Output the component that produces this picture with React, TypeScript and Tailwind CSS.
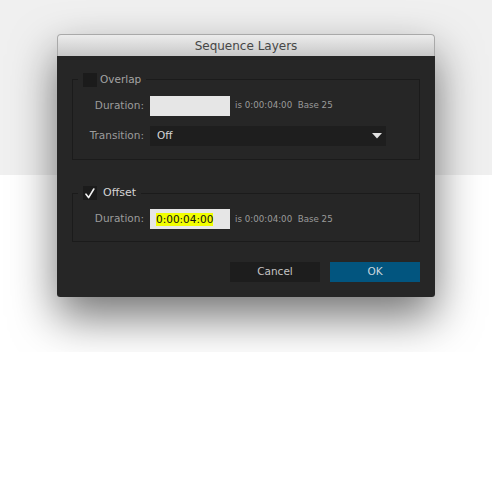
const font = "font-['DejaVu_Sans',sans-serif]";

function Checkbox({ checked }: { checked?: boolean }) {
  return (
    <span className="flex h-[14px] w-[14px] items-center justify-center bg-[#1b1b1b]">
      {checked && (
        <svg width="10" height="11" viewBox="0 0 10 11" fill="none">
          <path
            d="M1 6.2 L3.6 9.6 L8.8 1"
            stroke="#f2f2f2"
            strokeWidth="1.6"
            strokeLinecap="round"
            strokeLinejoin="round"
          />
        </svg>
      )}
    </span>
  );
}

function Row({ label, children }: { label: string; children: React.ReactNode }) {
  return (
    <div className="flex h-[20px] items-center">
      <span className="w-[71px] text-right text-[10.5px] text-[#9c9c9c]">{label}</span>
      <div className="ml-[6px] flex h-full items-center">{children}</div>
    </div>
  );
}

function Hint() {
  return (
    <span className="ml-[5px] text-[8.7px] text-[#9a9a9a] whitespace-pre">
      is 0:00:04:00  Base 25
    </span>
  );
}

export default function App() {
  return (
    <div className={`h-[500px] w-[492px] bg-white ${font}`}>
      <div className="h-[352px] overflow-hidden bg-[linear-gradient(to_bottom,#f0f0f0_175px,#ffffff_175px)] pl-[57px] pt-[34px]">
        <div className="w-[378px] rounded-[4px] shadow-[0_20px_45px_rgba(0,0,0,0.55)]">
          {/* title bar */}
          <div className="flex h-[22px] items-center justify-center rounded-t-[4px] border border-b-0 border-[#a9a9a9] bg-[linear-gradient(to_bottom,#ececec,#c8c8c8)] text-[12px] text-[#474747]">
            Sequence Layers
          </div>

          <div className="rounded-b-[3px] bg-[#262626] px-[15px] pb-[15px] pt-[16px]">
            {/* overlap group */}
            <fieldset className="border border-[#1b1b1b] px-0 pb-[13px] pt-[8px]">
              <legend className="ml-[5px] flex items-center gap-[3px] px-[5px]">
                <Checkbox />
                <span className="text-[10.5px] text-[#a3a3a3]">Overlap</span>
              </legend>
              <div className="flex flex-col gap-[10px]">
                <Row label="Duration:">
                  <div className="h-[20px] w-[80px] bg-[#e6e6e6]" />
                  <Hint />
                </Row>
                <Row label="Transition:">
                  <div className="flex h-[20px] w-[236px] items-center justify-between bg-[#1e1e1e] pl-[7px] pr-[4px]">
                    <span className="text-[10.5px] text-[#d6d6d6]">Off</span>
                    <svg width="10" height="6" viewBox="0 0 10 6">
                      <path d="M0 0 H10 L5 5.5 Z" fill="#e2e2e2" />
                    </svg>
                  </div>
                </Row>
              </div>
            </fieldset>

            {/* offset group */}
            <fieldset className="mt-[25px] border border-[#1b1b1b] px-0 pb-[12px] pt-[8px]">
              <legend className="ml-[5px] flex items-center gap-[6px] px-[5px]">
                <Checkbox checked />
                <span className="text-[11px] text-[#d4d4d4]">Offset</span>
              </legend>
              <Row label="Duration:">
                <div className="flex h-[20px] w-[80px] items-center bg-[#e6e6e6] pl-[6px]">
                  <span className="bg-[#f2ff00] text-[10.5px] leading-[13px] text-[#111]">0:00:04:00</span>
                </div>
                <Hint />
              </Row>
            </fieldset>

            <div className="mt-[20px] flex justify-end gap-[10px]">
              <button className="h-[20px] w-[90px] bg-[#1d1d1d] text-[10.5px] text-[#c4c4c4]">Cancel</button>
              <button className="h-[20px] w-[90px] bg-[#02557f] text-[10.5px] text-[#c9d5de]">OK</button>
            </div>
          </div>
        </div>
      </div>
    </div>
  );
}
